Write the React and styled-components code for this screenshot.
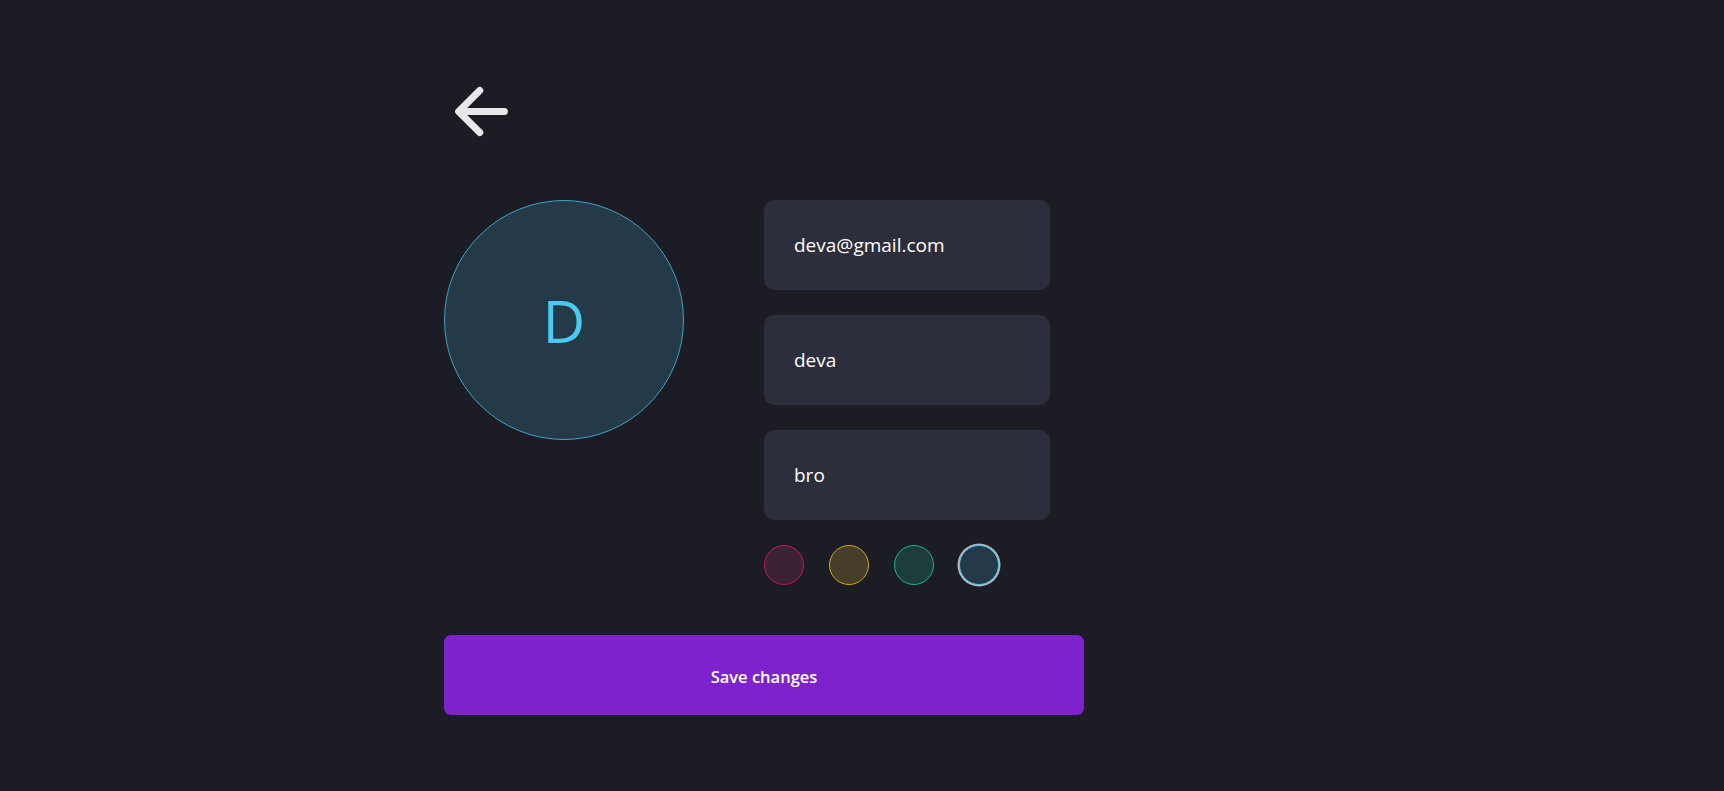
import styled, { createGlobalStyle } from "styled-components";
import { IoArrowBack } from "react-icons/io5";

const SWATCHES = [
  { id: "red", fill: "#3d2233", stroke: "#c0185a" },
  { id: "yellow", fill: "#463e28", stroke: "#d4a51a" },
  { id: "green", fill: "#1c3d3a", stroke: "#14b88a" },
  { id: "blue", fill: "#243a48", stroke: "#4cc9f0" },
];

const GlobalStyle = createGlobalStyle`
  html, body {
    margin: 0;
    padding: 0;
    background-color: #1c1c24;
    font-family: "Open Sans", "Noto Sans", sans-serif;
  }
`;

const Page = styled.div`
  min-height: 791px;
  background-color: #1c1c24;
`;

const Container = styled.div`
  width: 836px;
  margin: 0 auto;
  padding-top: 74px;
  display: flex;
  flex-direction: column;
`;

const BackButton = styled.button`
  width: 75px;
  height: 75px;
  padding: 0;
  border: none;
  background: transparent;
  color: #e8e8ea;
  cursor: pointer;
  display: flex;

  & svg {
    width: 75px;
    height: 75px;
  }
`;

const ProfileRow = styled.div`
  display: flex;
  align-items: flex-start;
  gap: 80px;
  margin-top: 51px;
`;

const Avatar = styled.div`
  width: 238px;
  height: 238px;
  border-radius: 50%;
  border: 1px solid #3ea3c4;
  background-color: ${({ $fill }) => $fill};
  display: flex;
  align-items: center;
  justify-content: center;
  color: #4cc9f0;
  font-size: 59px;
  font-weight: 400;
  flex-shrink: 0;
`;

const Form = styled.div`
  display: flex;
  flex-direction: column;
  gap: 25px;
`;

const Field = styled.input`
  width: 286px;
  height: 90px;
  box-sizing: border-box;
  padding: 0 30px;
  border: none;
  border-radius: 10px;
  background-color: #2d2e3b;
  color: #ffffff;
  font-family: "Open Sans", "Noto Sans", sans-serif;
  font-size: 19px;
  outline: none;
`;

const SwatchRow = styled.div`
  display: flex;
  align-items: center;
  gap: 25px;
`;

const Swatch = styled.button`
  width: 40px;
  height: 40px;
  padding: 0;
  border-radius: 50%;
  border: 1px solid ${({ $stroke }) => $stroke};
  background-color: ${({ $fill }) => $fill};
  box-shadow: ${({ $active }) =>
    $active ? "0 0 0 1.5px rgba(225, 235, 240, 0.75)" : "none"};
  cursor: pointer;
`;

const SaveButton = styled.button`
  width: 640px;
  height: 80px;
  margin-top: 50px;
  padding-top: 3px;
  border: none;
  border-radius: 7px;
  background-color: #7e22ce;
  color: #ffffff;
  font-family: "Open Sans", "Noto Sans", sans-serif;
  font-size: 16.5px;
  font-weight: 600;
  cursor: pointer;
`;

const App = () => {
  const active = "blue";
  const current = SWATCHES.find((s) => s.id === active);

  return (
    <Page>
      <GlobalStyle />
      <Container>
        <BackButton aria-label="Back">
          <IoArrowBack />
        </BackButton>

        <ProfileRow>
          <Avatar $fill={current.fill}>D</Avatar>

          <Form>
            <Field defaultValue="deva@gmail.com" />
            <Field defaultValue="deva" />
            <Field defaultValue="bro" />

            <SwatchRow>
              {SWATCHES.map((s) => (
                <Swatch
                  key={s.id}
                  $fill={s.fill}
                  $stroke={s.stroke}
                  $active={s.id === active}
                />
              ))}
            </SwatchRow>
          </Form>
        </ProfileRow>

        <SaveButton>Save changes</SaveButton>
      </Container>
    </Page>
  );
};

export default App;
